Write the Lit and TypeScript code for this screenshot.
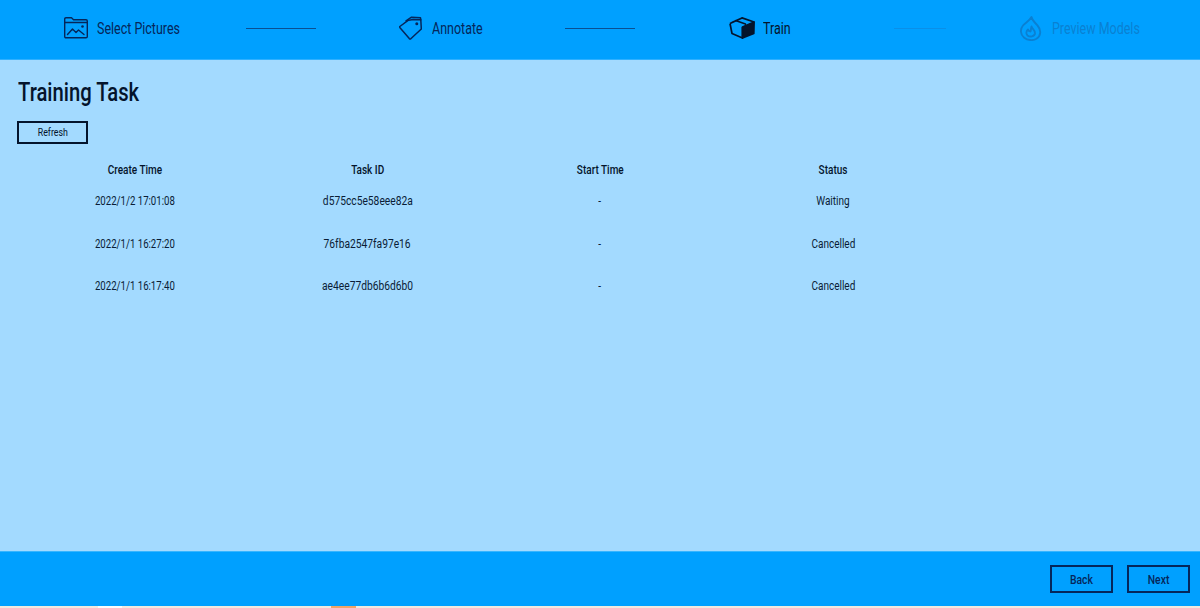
import { LitElement, html, css, svg } from "lit";
import { customElement } from "lit/decorators.js";

const folderIcon = svg`<svg class="ico" width="24" height="22" viewBox="0 0 24 22" fill="none" stroke="currentColor" stroke-width="1.400" stroke-linejoin="round" stroke-linecap="round">
<path d="M.7 19.500V2q0-1.300 1.300-1.300h5.500l2 2h12.500q1.300 0 1.300 1.300v15.500q0 1.300-1.300 1.300H2q-1.300 0-1.300-1.300z"/><path d="M.7 5.500h22.600"/><path d="M3.500 17.500l5-5.500 3.500 3.500 2.500-2.500 5.500 4.500"/><circle cx="18.500" cy="9.500" r="1.300" fill="currentColor" stroke="none"/></svg>`;
const tagIcon = svg`<svg class="ico" width="23" height="24" viewBox="0 0 23 24" fill="none" stroke="currentColor" stroke-width="1.500" stroke-linejoin="round" stroke-linecap="round">
<path d="M.8 10.500 9.500 4.200 14.500 3.600 21.800 3.800 22.300 13 11.800 22.800q-.8.500-1.500-.2L1 11.800q-.6-.7-.2-1.300z"/><path d="M7 4.800 12.500 1.200 21.500 1.800 21.800 3.800"/><circle cx="17.800" cy="7.800" r="1.500" fill="currentColor" stroke="none"/></svg>`;
const boxIcon = svg`<svg class="ico" width="26" height="22" viewBox="0 0 26 22" fill="none" stroke="currentColor" stroke-width="1.700" stroke-linejoin="round">
<path d="M1 6.500 13 .9 2.800 5.500M1 6.500 3 16.500 13.500 21V10"/><path d="M13.500 10 25.100 5 24.800 16.500 13.500 21z" fill="currentColor"/><path d="M13 .9 25.100 5"/><path d="M6.500 3.500 16.500 7V9" stroke-width="1.400"/></svg>`;
const fireIcon = svg`<svg class="ico" width="22" height="25" viewBox="0 0 22 25" fill="none" stroke="currentColor" stroke-width="1.900" stroke-linejoin="round" stroke-linecap="round">
<path d="M11.500 1C12 4.500 15 6.500 17.500 9.500 21.500 14 21 20 16.500 22.800 13 24.800 7.500 24.500 4.200 21.800.2 18.500 0 13 3 9.500 5 7 9.500 5 11.500 1z"/><path d="M11.500 10.500C12 13 15.500 14 15 17.500 14.500 20.500 10 21.500 7.500 19.500 5.500 17.500 6.500 15 8 13.500 8.500 15 9.500 15.500 10.500 15.500 11 14 11 12 11.500 10.500z"/></svg>`;

const rows = [
  ["2022/1/2 17:01:08", "d575cc5e58eee82a", "-", "Waiting"],
  ["2022/1/1 16:27:20", "76fba2547fa97e16", "-", "Cancelled"],
  ["2022/1/1 16:17:40", "ae4ee77db6b6d6b0", "-", "Cancelled"],
];

@customElement("app-root")
export class AppRoot extends LitElement {
  static styles = css`
    :host { display: block; width: 1200px; height: 608px; overflow: hidden; font-family: Roboto, "Liberation Sans", sans-serif; color: #04142c; }
    .page { display: flex; flex-direction: column; height: 608px; background: #a3daff; }
    .sq { display: inline-block; white-space: nowrap; transform: scaleX(.8); }
    .top { height: 60px; flex: none; background: #00a0ff; border-bottom: 1px solid #2fb0ff; display: flex; align-items: center; color: #05265a; font-size: 16px; padding: 0 0 3px 64px; box-sizing: border-box; }
    .step { display: flex; align-items: center; flex: none; }
    .label { transform: scaleX(.78); transform-origin: left center; }
    .s1 .label { margin-left: 9px; width: 83px; }
    .s2 .label { margin-left: 10px; width: 51px; }
    .s3 .label { margin-left: 8px; width: 28px; }
    .s4 .label { margin-left: 10px; width: 89px; }
    .ico { display: block; flex: none; }
    .line { height: 1px; background: #0a4f92; flex: none; }
    .l1 { width: 70px; margin: 0 83px 0 66px; }
    .l2 { width: 70px; margin: 0 94px 0 82px; }
    .l3 { width: 52px; margin: 0 74px 0 103px; background: #0a8fe8; }
    .s3 { color: #04142c; }
    .s4 { color: #0a80d2; }
    .main { flex: 1; padding: 0 17px; }
    h1 { margin: 19px 0 0 1px; font-size: 25px; line-height: 28px; font-weight: 500; color: #04142c; }
    h1 .sq { transform: scaleX(.81); transform-origin: left center; }
    button { font: inherit; background: transparent; border: 2px solid #04142c; color: inherit; padding: 0; display: block; }
    .refresh { margin-top: 14px; width: 71px; height: 23px; font-size: 11px; }
    .table { margin: 16px 0 0 -17px; width: 932px; display: grid; grid-template-columns: 269px 197px 268px 198px; justify-items: center; font-size: 12.500px; color: #0a1c36; }
    .table > div { height: 42.500px; line-height: 42.500px; }
    .table > .head { font-weight: 500; height: 20px; line-height: 20px; color: #04142c; }
    .table .c0 { transform: scaleX(.77); }
    .table .c1 { transform: scaleX(.82); }
    .foot { height: 55px; flex: none; background: #00a0ff; border-top: 1px solid #37b5ff; box-sizing: border-box; display: flex; justify-content: flex-end; align-items: center; gap: 14px; padding: 0 10px 0 0; color: #05265a; }
    .foot button { width: 63px; height: 28px; font-size: 13px; font-weight: 500; border-color: #05265a; }
    .strip { height: 2px; flex: none; background: #f2e9df; display: flex; }
    .white { width: 24px; margin-left: 98px; background: #fbfbfb; }
    .orange { width: 25px; margin-left: 209px; background: #f0a468; }
  `;
  render() {
    return html`<div class="page">
      <div class="top">
        <div class="step s1">${folderIcon}<span class="sq label">Select Pictures</span></div><div class="line l1"></div>
        <div class="step s2">${tagIcon}<span class="sq label">Annotate</span></div><div class="line l2"></div>
        <div class="step s3">${boxIcon}<span class="sq label">Train</span></div><div class="line l3"></div>
        <div class="step s4">${fireIcon}<span class="sq label">Preview Models</span></div>
      </div>
      <div class="main">
        <h1><span class="sq">Training Task</span></h1>
        <button class="refresh"><span class="sq">Refresh</span></button>
        <div class="table">
          ${["Create Time", "Task ID", "Start Time", "Status"].map((h) => html`<div class="head"><span class="sq">${h}</span></div>`)}
          ${rows.map((r) => r.map((c, i) => html`<div><span class="sq c${i}">${c}</span></div>`))}
        </div>
      </div>
      <div class="foot"><button><span class="sq">Back</span></button><button><span class="sq">Next</span></button></div>
      <div class="strip"><div class="white"></div><div class="orange"></div></div>
    </div>`;
  }
}
